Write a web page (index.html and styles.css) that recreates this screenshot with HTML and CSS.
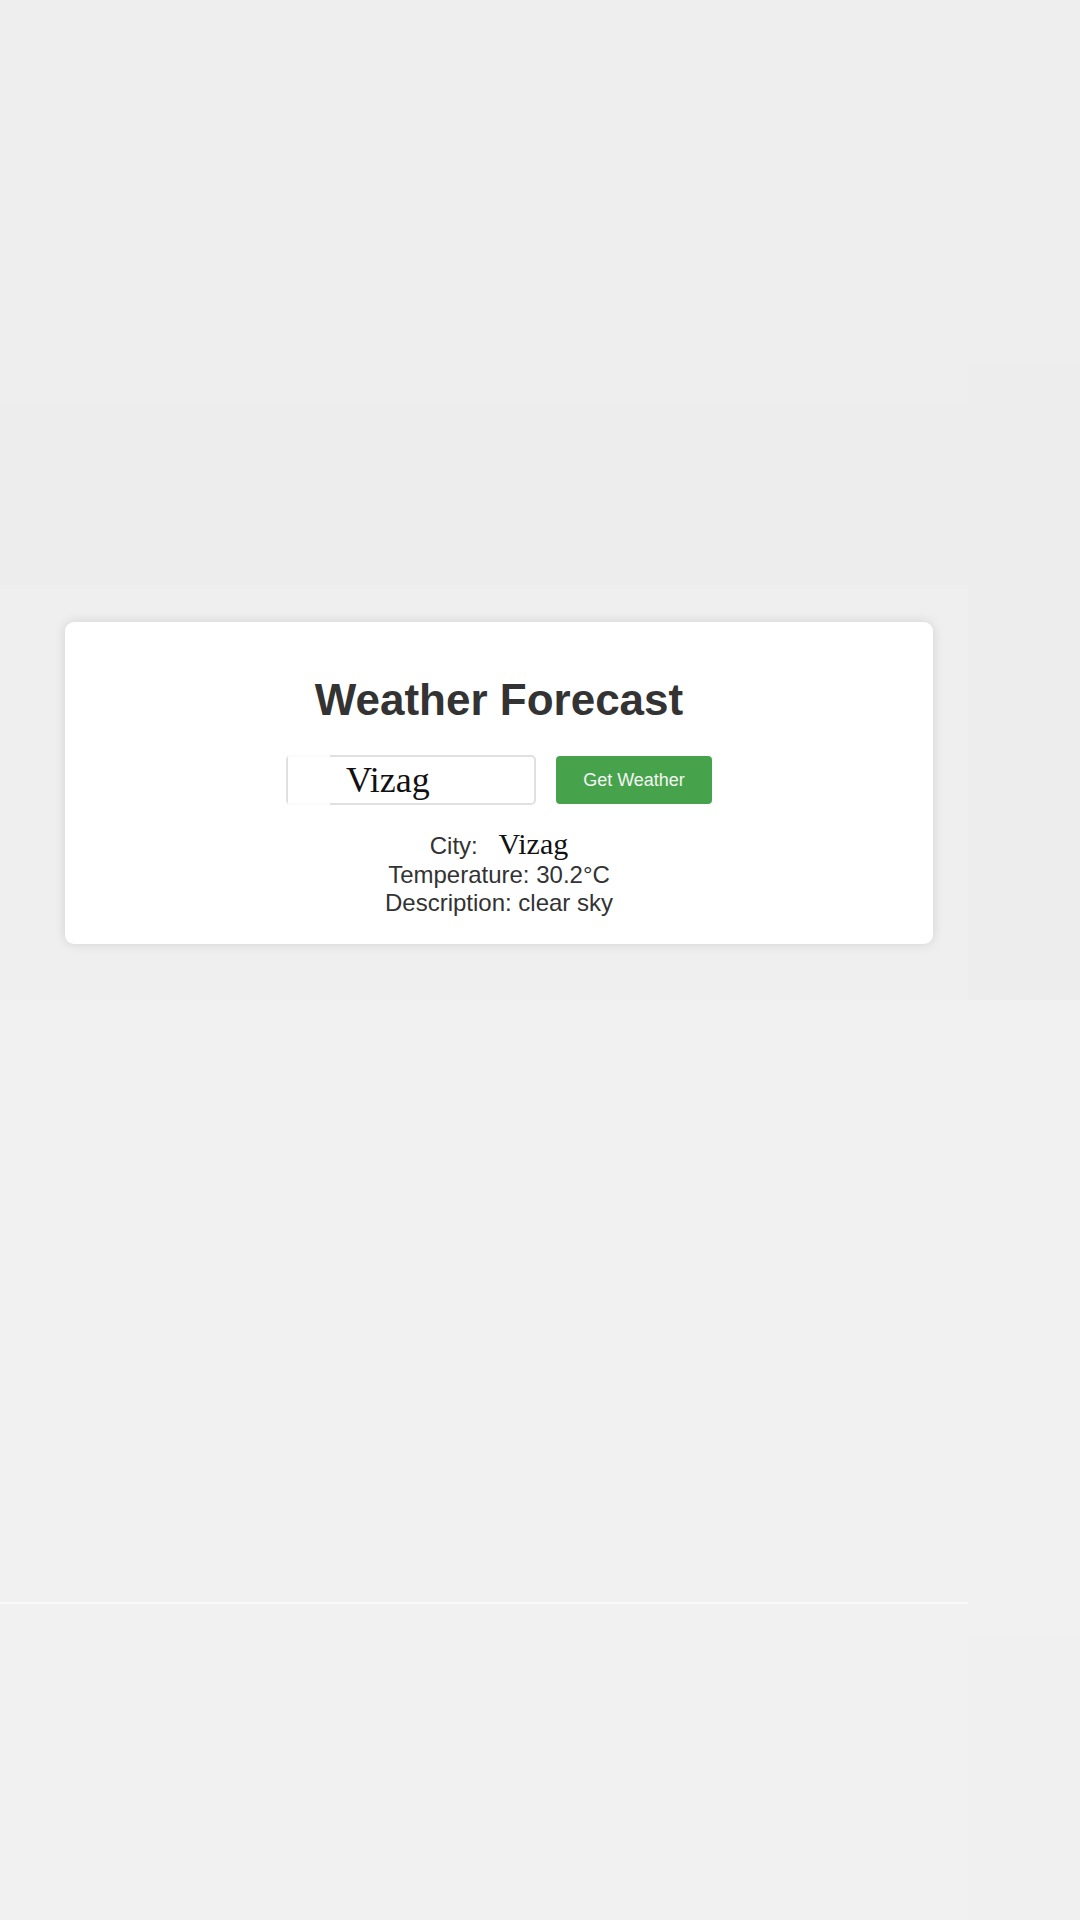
FILE: index.html
```html
<!DOCTYPE html>
<html lang="en">
<head>
<meta charset="utf-8">
<title>Weather Forecast</title>
<link rel="stylesheet" href="styles.css">
</head>
<body>
<div class="stage">
  <div class="col-main">
    <div class="band band-a"></div>
    <div class="band band-b"></div>
    <div class="band band-c">
      <div class="card">
        <h1 class="title">Weather Forecast</h1>
        <div class="form-row">
          <div class="input-wrap">
            <input class="city-input" type="text" value="Vizag">
          </div>
          <button class="btn" type="button">Get Weather</button>
        </div>
        <div class="results">
          <div class="line">City: <span class="city-name">Vizag</span></div>
          <div class="line">Temperature: 30.2°C</div>
          <div class="line">Description: clear sky</div>
        </div>
      </div>
    </div>
    <div class="band band-d"></div>
    <div class="band-line"></div>
    <div class="band band-e"></div>
  </div>
  <div class="col-side">
    <div class="side side-a"></div>
    <div class="side side-b"></div>
    <div class="side side-c"></div>
    <div class="side side-d"></div>
  </div>
</div>
</body>
</html>
```
FILE: styles.css
```css
* { box-sizing: border-box; }
html, body { margin: 0; padding: 0; }
body {
  background: #eeeeee;
  font-family: "Liberation Sans", Arial, sans-serif;
  color: #333;
}
.stage {
  display: flex;
  width: 1080px;
  height: 1920px;
  overflow: hidden;
}
.col-main {
  width: 968px;
  display: flex;
  flex-direction: column;
}
.band-a { height: 404px; background: #eeeeee; }
.band-b { height: 181px; background: #ededed; }
.band-c {
  height: 415px;
  background: #efefef;
  padding: 37px 35px 0 65px;
}
.band-d { height: 602px; background: #f1f1f1; }
.band-line { height: 2px; background: #fafafa; }
.band-e { flex: 1; background: #f1f1f1; }

.col-side {
  flex: 1;
  display: flex;
  flex-direction: column;
}
.side-a { height: 364px; background: #eeeeee; }
.side-b { height: 636px; background: #ededed; }
.side-c { height: 636px; background: #f1f1f1; }
.side-d { flex: 1; background: #f0f0f0; }

.card {
  width: 868px;
  height: 322px;
  background: #ffffff;
  border-radius: 9px;
  box-shadow: 0 0 12px rgba(0, 0, 0, 0.12);
  padding-top: 52px;
  display: flex;
  flex-direction: column;
  align-items: center;
}
.title {
  margin: 0;
  font-size: 44px;
  line-height: 51px;
  font-weight: bold;
  color: #333333;
}
.form-row {
  margin-top: 30px;
  display: flex;
  align-items: center;
  gap: 20px;
}
.input-wrap {
  position: relative;
}
.input-wrap::before {
  content: "";
  position: absolute;
  left: 2px;
  top: -1px;
  width: 42px;
  height: 52px;
  background: #ffffff;
  pointer-events: none;
  z-index: 1;
  opacity: 0.85;
}
.city-input {
  width: 250px;
  height: 50px;
  border: 2px solid #e0e0e0;
  border-radius: 5px;
  padding: 0 0 0 58px;
  font-family: "Liberation Serif", "Times New Roman", serif;
  font-size: 36px;
  color: #111;
  background: #fff;
  outline: none;
}
.btn {
  width: 156px;
  height: 48px;
  border: none;
  border-radius: 4px;
  background: #47a34b;
  color: #f4f4f4;
  font-family: "Liberation Sans", Arial, sans-serif;
  font-size: 18px;
  padding: 0;
}
.results {
  margin-top: 25px;
  text-align: center;
}
.line {
  font-size: 24px;
  line-height: 28.5px;
  color: #333333;
}
.city-name {
  font-family: "Liberation Serif", "Times New Roman", serif;
  font-size: 30px;
  color: #111;
  margin-left: 14px;
}
```
